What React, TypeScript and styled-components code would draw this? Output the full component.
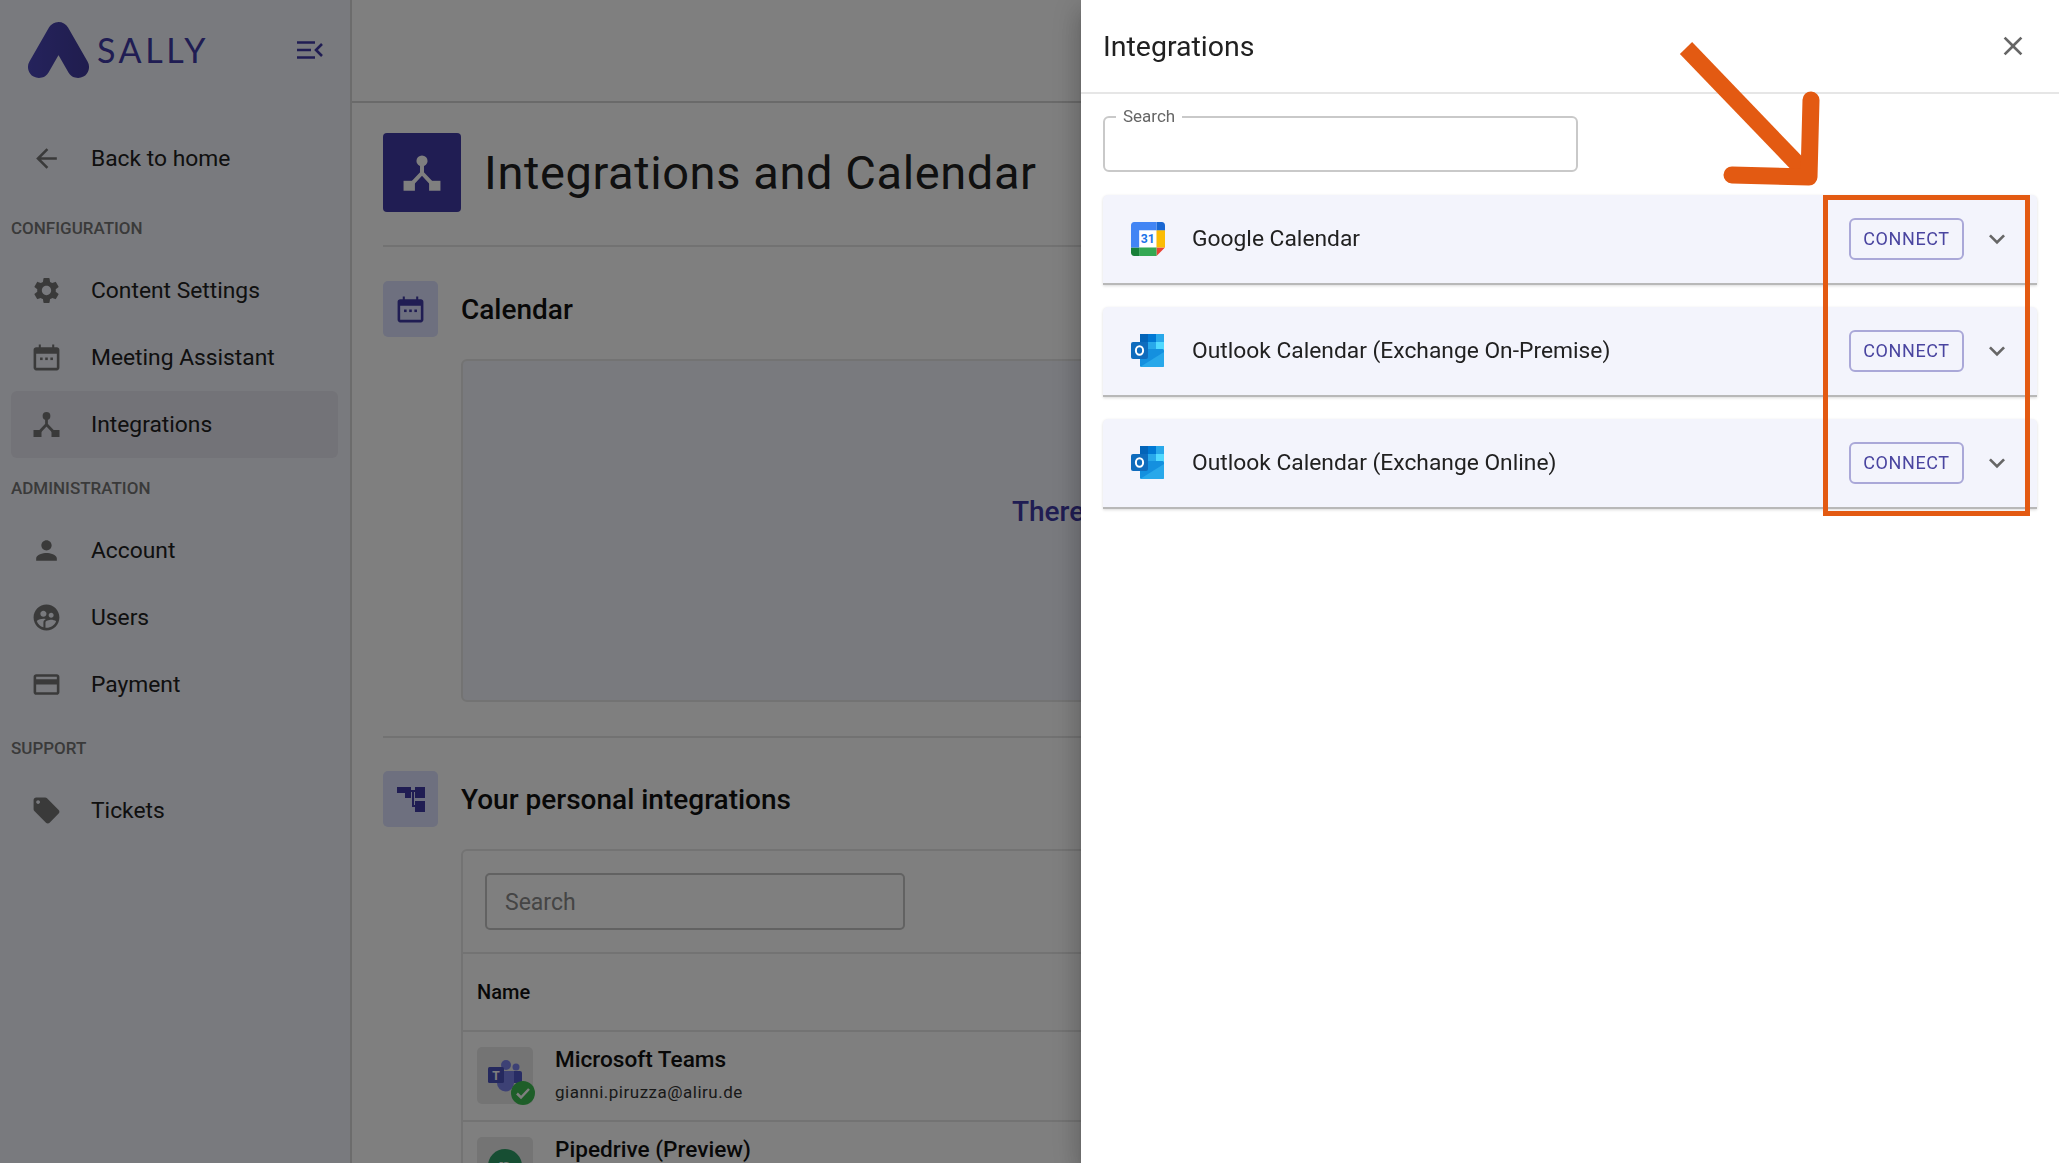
import styled, { createGlobalStyle } from "styled-components";
import {
  MdArrowBack,
  MdSettings,
  MdPerson,
  MdSupervisedUserCircle,
  MdOutlineCreditCard,
  MdLocalOffer,
  MdClose,
  MdExpandMore,
} from "react-icons/md";

const GlobalStyle = createGlobalStyle`
  * { box-sizing: border-box; }
  html, body { margin: 0; height: 100%; overflow: hidden; }
  body { font-family: Roboto, "Liberation Sans", sans-serif; color: #212121; background: #fff; }
`;

const Page = styled.div`
  display: flex;
  width: 2059px;
  height: 1163px;
  overflow: hidden;
`;

const Sidebar = styled.aside`
  flex: 0 0 352px;
  background: #f2f4fc;
  border-right: 2px solid #d8d8d8;
  padding: 0 12px 0 11px;
`;

const Brand = styled.div`
  display: flex;
  align-items: center;
  height: 101px;
  margin: 0 -9px 24px -11px;
  padding: 0 24px 2px 28px;
`;

const BrandName = styled.span`
  font-family: Lato, sans-serif;
  font-size: 34px;
  letter-spacing: 3.6px;
  color: #403aa6;
  margin-left: 8px;
  flex: 1;
`;

const NavItem = styled.div<{ $active?: boolean }>`
  display: flex;
  align-items: center;
  height: 67px;
  border-radius: 6px;
  padding-left: 20px;
  gap: 29px;
  font-size: 22.8px;
  color: #212121;
  background: ${(p) => (p.$active ? "#e6e6f0" : "transparent")};
  svg { flex: 0 0 31px; width: 31px; height: 31px; color: #757575; }
`;

const NavLabel = styled.div<{ $first?: boolean }>`
  display: flex;
  align-items: center;
  height: 59px;
  margin-top: ${(p) => (p.$first ? "6px" : "0")};
  font-size: 17px;
  font-weight: 500;
  color: #757575;
`;

const Main = styled.main`
  flex: 1;
  min-width: 0;
  background: #fff;
`;

const TopBar = styled.div`
  height: 103px;
  border-bottom: 2px solid #d4d4d4;
`;

const Content = styled.div`
  padding: 30px 33px 0 31px;
`;

const TitleRow = styled.div`
  display: flex;
  align-items: center;
  gap: 23px;
  padding-bottom: 33px;
  border-bottom: 2px solid #e4e4e4;
`;

const TitleIcon = styled.div`
  display: flex;
  align-items: center;
  justify-content: center;
  width: 78px;
  height: 79px;
  border-radius: 4px;
  background: #403aa6;
  color: #fff;
`;

const Title = styled.h1`
  margin: 0;
  font-size: 47px;
  font-weight: 400;
  letter-spacing: 0.6px;
  color: #212121;
`;

const SectionHead = styled.div<{ $top: number }>`
  display: flex;
  align-items: center;
  gap: 23px;
  margin-top: ${(p) => p.$top}px;
`;

const SectionIcon = styled.div`
  display: flex;
  align-items: center;
  justify-content: center;
  width: 55px;
  height: 56px;
  border-radius: 5px;
  background: #dce0ff;
  color: #403aa6;
`;

const SectionTitle = styled.h2`
  margin: 0;
  font-size: 28px;
  font-weight: 500;
  color: #111;
`;

const Panel = styled.div`
  margin: 22px 0 0 78px;
  border: 2px solid #e6e6e6;
  border-radius: 6px;
`;

const EmptyPanel = styled(Panel)`
  display: flex;
  align-items: center;
  height: 343px;
  padding-left: 549px;
  padding-bottom: 38px;
  background: #f2f4fc;
  font-size: 28px;
  font-weight: 500;
  color: #403aa6;
`;

const PanelRule = styled.div`
  height: 2px;
  margin-top: 34px;
  background: #e4e4e4;
`;

const SearchBar = styled.div`
  padding: 22px 22px 22px;
  border-bottom: 2px solid #e6e6e6;
`;

const SearchInput = styled.input`
  display: block;
  width: 420px;
  height: 57px;
  padding: 2px 18px 0;
  border: 2px solid #c4c4c4;
  border-radius: 5px;
  background: transparent;
  font: 400 23px Roboto, sans-serif;
  &::placeholder { color: #8a8a8a; opacity: 1; }
`;

const TableHead = styled.div`
  display: flex;
  align-items: center;
  height: 78px;
  padding-left: 14px;
  border-bottom: 2px solid #e6e6e6;
  font-size: 20px;
  font-weight: 500;
  color: #111;
`;

const TableRow = styled.div`
  display: flex;
  gap: 22px;
  height: 90px;
  padding: 15px 14px 0;
  border-bottom: 2px solid #e6e6e6;
`;

const AppBox = styled.div`
  position: relative;
  flex: 0 0 56px;
  height: 57px;
  border-radius: 5px;
  background: #e8e8e8;
  display: flex;
  align-items: center;
  justify-content: center;
`;

const Badge = styled.span`
  position: absolute;
  right: -2px;
  bottom: -1px;
  display: flex;
  svg { display: block; }
`;

const AppName = styled.div`
  font-size: 22.6px;
  font-weight: 500;
  line-height: 26px;
  color: #111;
`;

const AppMail = styled.div`
  margin-top: 9px;
  font-size: 17px;
  letter-spacing: 0.5px;
  color: #333;
`;

const Scrim = styled.div`
  position: fixed;
  inset: 0;
  background: rgba(0, 0, 0, 0.5);
`;

const Drawer = styled.section`
  position: fixed;
  top: 0;
  bottom: 0;
  left: 1081px;
  right: 0;
  background: #fff;
  box-shadow: 0 8px 10px -5px rgba(0, 0, 0, 0.2), 0 16px 24px 2px rgba(0, 0, 0, 0.14), 0 6px 30px 5px rgba(0, 0, 0, 0.12);
`;

const DrawerHead = styled.header`
  display: flex;
  align-items: center;
  justify-content: space-between;
  height: 94px;
  padding: 0 30px 0 22px;
  border-bottom: 2px solid #e6e6e6;
  font-size: 28.5px;
  color: #212121;
  svg { width: 32px; height: 32px; color: #666; }
`;

const DrawerBody = styled.div`
  padding: 13px 22px 0;
`;

const Field = styled.fieldset`
  width: 475px;
  height: 65px;
  margin: 0 0 23px;
  padding: 0 12px;
  border: 2px solid #c9c9c9;
  border-radius: 6px;
`;

const FieldLabel = styled.legend`
  margin-left: -1px;
  padding: 0 7px 2px;
  font-size: 17px;
  line-height: 18px;
  color: #666;
`;

const AccordionList = styled.div`
  display: flex;
  flex-direction: column;
  gap: 22px;
`;

const Accordion = styled.div`
  display: flex;
  align-items: center;
  height: 90px;
  padding: 0 24px 0 28px;
  border-radius: 5px 5px 0 0;
  border-bottom: 2px solid #b8b8b8;
  background: #f3f4fc;
  box-shadow: 0 1px 3px rgba(0, 0, 0, 0.15);
`;

const AccordionName = styled.span`
  flex: 1;
  margin: 0 0 2px 27px;
  font-size: 22.8px;
  color: #212121;
`;

const ConnectButton = styled.button`
  width: 115px;
  height: 42px;
  padding: 0 0 2px;
  border: 2px solid #aaa8d8;
  border-radius: 6px;
  background: transparent;
  color: #4a45a0;
  font: 400 18px Roboto, sans-serif;
  letter-spacing: 0.6px;
`;

const Chevron = styled.span`
  display: flex;
  margin-left: 17px;
  color: #666;
  svg { width: 32px; height: 32px; }
`;

const Callout = styled.div`
  position: fixed;
  left: 1823px;
  top: 195px;
  width: 207px;
  height: 321px;
  border: 5px solid #e35a12;
`;

const CalloutArrow = styled.svg`
  position: fixed;
  left: 1670px;
  top: 30px;
`;

const CollapseIcon = () => (
  <svg width="26" height="18" viewBox="0 0 26 18" fill="none" stroke="#403aa6" strokeWidth="2.6">
    <path d="M0 1.5h18M0 9h14M0 16.5h18" />
    <path d="M25 3l-6 6 6 6" />
  </svg>
);

const LogoMark = () => (
  <svg width="61" height="58" viewBox="0 0 61 58" fill="none">
    <defs>
      <linearGradient id="logoFill" x1="0" y1="0" x2="61" y2="0" gradientUnits="userSpaceOnUse">
        <stop offset="0" stopColor="#4a46b8" />
        <stop offset="1" stopColor="#403a9c" />
      </linearGradient>
    </defs>
    <path d="M11 46 L30.5 12 L50 46" stroke="url(#logoFill)" strokeWidth="22" strokeLinecap="round" strokeLinejoin="round" />
  </svg>
);

const HubIcon = ({ size }: { size: number }) => (
  <svg width={size} height={size} viewBox="-2.5 -3 31 31" fill="currentColor">
    <circle cx="13" cy="4" r="3.900" />
    <rect x="0" y="18" width="8" height="7" />
    <rect x="18" y="18" width="8" height="7" />
    <path d="M13 5v8M13 12.500L5 21M13 12.500L21 21" fill="none" stroke="currentColor" strokeWidth="2.800" />
  </svg>
);

const CalendarIcon = ({ size }: { size: number }) => (
  <svg width={size} height={size} viewBox="0 0 24 24" fill="currentColor">
    <path d="M20 4h-2V2h-1.600v2H7.600V2H6v2H4C2.900 4 2 4.900 2 6v14c0 1.100.9 2 2 2h16c1.100 0 2-.9 2-2V6c0-1.100-.9-2-2-2zm0 16H4V9h16v11z" />
    <rect x="7" y="12" width="2" height="2" />
    <rect x="11" y="12" width="2" height="2" />
    <rect x="15" y="12" width="2" height="2" />
  </svg>
);

const TreeIcon = () => (
  <svg width="28" height="25" viewBox="0 0 28 25" fill="currentColor">
    <rect x="0" y="0" width="14" height="6" />
    <rect x="8" y="6" width="6" height="5" />
    <rect x="18" y="0" width="10" height="11" />
    <rect x="18" y="14" width="10" height="11" />
    <rect x="14" y="3" width="4" height="2" />
    <rect x="15" y="5" width="2" height="15" />
    <rect x="15" y="18" width="3" height="2" />
  </svg>
);

const GoogleCalendarIcon = () => (
  <svg width="34" height="34" viewBox="0 0 200 200">
    <rect x="48" y="48" width="102" height="102" fill="#fff" />
    <path d="M150 200l50-50h-50z" fill="#EA4335" />
    <rect x="150" y="48" width="50" height="102" fill="#FBBC04" />
    <rect x="48" y="150" width="102" height="50" fill="#34A853" />
    <path d="M0 150v31.500C0 192 8 200 18.500 200H48v-50z" fill="#188038" />
    <path d="M200 48V18.500C200 8 192 0 181.500 0H150v48z" fill="#1967D2" />
    <path d="M150 0H18.500C8 0 0 8 0 18.500V150h48V48h102z" fill="#4285F4" />
    <text x="99" y="124" textAnchor="middle" fontFamily="Roboto, sans-serif" fontWeight="700" fontSize="72" fill="#1a73e8">31</text>
  </svg>
);

const OutlookIcon = () => (
  <svg width="34" height="34" viewBox="0 0 34 34">
    <rect x="9" y="0" width="8" height="8" fill="#0364b8" />
    <rect x="17" y="0" width="8" height="8" fill="#0078d4" />
    <rect x="25" y="0" width="8" height="8" fill="#28a8ea" />
    <rect x="9" y="8" width="8" height="9" fill="#0078d4" />
    <rect x="17" y="8" width="8" height="9" fill="#28a8ea" />
    <rect x="25" y="8" width="8" height="9" fill="#50d9ff" />
    <rect x="9" y="15" width="24" height="18" rx="1.500" fill="#1490df" />
    <path d="M9 33l24-15v13.500a1.500 1.500 0 0 1-1.500 1.500z" fill="#28a8ea" />
    <rect x="0" y="8" width="17" height="17" rx="2" fill="#0f6cbd" />
    <ellipse cx="8.500" cy="16.500" rx="3.600" ry="4.300" fill="none" stroke="#fff" strokeWidth="2" />
  </svg>
);

const TeamsIcon = () => (
  <svg width="34" height="32" viewBox="0 0 34 32">
    <circle cx="28" cy="7" r="3.500" fill="#7b83eb" />
    <rect x="22" y="11" width="12" height="12" rx="2" fill="#5059c9" />
    <circle cx="18" cy="5" r="5" fill="#7b83eb" />
    <path d="M9 11h17v12a8.500 8.500 0 0 1-17 0z" fill="#7b83eb" />
    <rect x="0" y="7" width="16" height="16" rx="1.500" fill="#4b53bc" />
    <text x="8" y="20" textAnchor="middle" fontFamily="Roboto, sans-serif" fontWeight="700" fontSize="12" fill="#fff">T</text>
  </svg>
);

const CheckBadge = () => (
  <svg width="24" height="24" viewBox="0 0 24 24">
    <circle cx="12" cy="12" r="12" fill="#3dbd52" />
    <path d="M6 12.500l4 4 8-8.500" fill="none" stroke="#fff" strokeWidth="2.500" />
  </svg>
);

const PipedriveIcon = () => (
  <svg width="34" height="34" viewBox="0 0 34 34">
    <circle cx="17" cy="17" r="17" fill="#2f9c66" />
    <text x="17" y="26" textAnchor="middle" fontFamily="Roboto, sans-serif" fontWeight="700" fontSize="24" fill="#fff">p</text>
  </svg>
);

const calendars = [
  { name: "Google Calendar", icon: <GoogleCalendarIcon /> },
  { name: "Outlook Calendar (Exchange On-Premise)", icon: <OutlookIcon /> },
  { name: "Outlook Calendar (Exchange Online)", icon: <OutlookIcon /> },
];

export default function App() {
  return (
    <>
      <GlobalStyle />
      <Page>
        <Sidebar>
          <Brand>
            <LogoMark />
            <BrandName>SALLY</BrandName>
            <CollapseIcon />
          </Brand>
          <NavItem><MdArrowBack />Back to home</NavItem>
          <NavLabel $first>CONFIGURATION</NavLabel>
          <NavItem><MdSettings />Content Settings</NavItem>
          <NavItem><CalendarIcon size={31} />Meeting Assistant</NavItem>
          <NavItem $active><HubIcon size={31} />Integrations</NavItem>
          <NavLabel>ADMINISTRATION</NavLabel>
          <NavItem><MdPerson />Account</NavItem>
          <NavItem><MdSupervisedUserCircle />Users</NavItem>
          <NavItem><MdOutlineCreditCard />Payment</NavItem>
          <NavLabel>SUPPORT</NavLabel>
          <NavItem><MdLocalOffer />Tickets</NavItem>
        </Sidebar>
        <Main>
          <TopBar />
          <Content>
            <TitleRow>
              <TitleIcon><HubIcon size={44} /></TitleIcon>
              <Title>Integrations and Calendar</Title>
            </TitleRow>
            <SectionHead $top={34}>
              <SectionIcon><CalendarIcon size={31} /></SectionIcon>
              <SectionTitle>Calendar</SectionTitle>
            </SectionHead>
            <EmptyPanel>There</EmptyPanel>
            <PanelRule />
            <SectionHead $top={33}>
              <SectionIcon><TreeIcon /></SectionIcon>
              <SectionTitle>Your personal integrations</SectionTitle>
            </SectionHead>
            <Panel>
              <SearchBar><SearchInput placeholder="Search" /></SearchBar>
              <TableHead>Name</TableHead>
              <TableRow>
                <AppBox>
                  <TeamsIcon />
                  <Badge><CheckBadge /></Badge>
                </AppBox>
                <div>
                  <AppName>Microsoft Teams</AppName>
                  <AppMail>gianni.piruzza@aliru.de</AppMail>
                </div>
              </TableRow>
              <TableRow>
                <AppBox><PipedriveIcon /></AppBox>
                <AppName>Pipedrive (Preview)</AppName>
              </TableRow>
            </Panel>
          </Content>
        </Main>
      </Page>
      <Scrim />
      <Drawer>
        <DrawerHead>
          Integrations
          <MdClose />
        </DrawerHead>
        <DrawerBody>
          <Field>
            <FieldLabel>Search</FieldLabel>
          </Field>
          <AccordionList>
            {calendars.map((c) => (
              <Accordion key={c.name}>
                {c.icon}
                <AccordionName>{c.name}</AccordionName>
                <ConnectButton>CONNECT</ConnectButton>
                <Chevron><MdExpandMore /></Chevron>
              </Accordion>
            ))}
          </AccordionList>
        </DrawerBody>
      </Drawer>
      <Callout />
      <CalloutArrow width="150" height="160" viewBox="0 0 150 160" fill="none" stroke="#e35a12" strokeWidth="17">
        <path d="M16 18 L140 147" />
        <path d="M141 70 L139 147 L62 145" strokeLinecap="round" strokeLinejoin="round" />
      </CalloutArrow>
    </>
  );
}
